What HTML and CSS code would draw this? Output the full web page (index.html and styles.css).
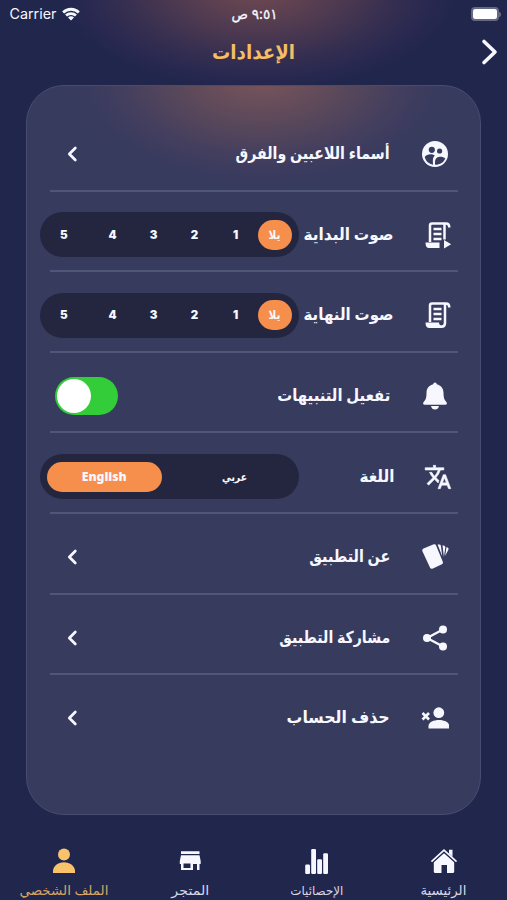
FILE: index.html
```
<!DOCTYPE html>
<html lang="ar" dir="rtl">
<head>
<meta charset="utf-8">
<title>الإعدادات</title>
<link rel="stylesheet" href="styles.css">
</head>
<body>
<div class="screen">
  <div class="status" dir="ltr">
    <div class="carrier"><span class="fit" data-w="47">Carrier</span>
      <svg class="wifi" viewBox="0 0 18 14"><path d="M0.2 4.500a12.400 12.400 0 0 1 17.600 0L15.900 6.600a9.700 9.700 0 0 0-13.800 0ZM3.100 7.600a8.400 8.400 0 0 1 11.800 0L13 9.600a5.600 5.600 0 0 0-8 0ZM6 10.500a4.200 4.200 0 0 1 6 0L9 13.600Z"/></svg>
    </div>
    <div class="time" dir="rtl"><span class="fit" data-w="46">٩:٥١ ص</span></div>
    <div class="power"><span class="battery"><i></i></span><span class="nub"></span></div>
  </div>
  <header class="header">
    <svg class="back" viewBox="0 0 18 28"><path d="M4 3.500l11 10.500L4 24.500"/></svg>
    <h1><span class="fit" data-w="83">الإعدادات</span></h1>
  </header>

  <main class="card">
    <div class="row">
      <svg class="icon" viewBox="0 0 28 28"><circle cx="14" cy="14" r="13"/><g class="cut"><circle cx="10.800" cy="9.800" r="3.100"/><circle cx="18.600" cy="11" r="2.600"/><path d="M3.700 17c2-3.100 7.200-3.600 10.200-1.300-2 1.400-2.300 3.800-1.800 9-4.200-.7-7.200-3.400-8.400-7.700ZM14.200 24.800c-.5-4.300.2-8 4.700-8 2.500 0 4.300.5 5.400 1.700-1.500 3.800-5.100 6.300-10.100 6.300Z"/></g></svg>
      <div class="label"><span class="fit" data-w="154">أسماء اللاعبين والفرق</span></div>
      <svg class="chev" viewBox="0 0 12 18"><path d="M9.300 3L3.300 9l6 6"/></svg>
    </div>
    <div class="row wide">
      <svg class="icon line" viewBox="0 0 28 28"><path d="M6 21V4.200Q6 2.500 8 2.500H22Q25.300 2.500 25.300 6.500M20.500 3V18.500M9.500 8h8M9.500 13h8M9.500 18h8"/><path class="solid" d="M1.500 21.500H15.500V27H5Q1.500 27 1.500 21.500ZM20 19L27.200 23.200 20 27.500Z"/></svg>
      <div class="label"><span class="fit" data-w="90">صوت البداية</span></div>
      <div class="pill sounds"><b class="on"><span class="fit" data-w="12">يلا</span></b><b>1</b><b>2</b><b>3</b><b>4</b><b>5</b></div>
    </div>
    <div class="row wide">
      <svg class="icon line" viewBox="0 0 28 28"><path d="M6 21V4.200Q6 2.500 8 2.500H22Q25.300 2.500 25.300 6.500M21 3V22Q21 25.700 17.500 25.700M9.500 8h8M9.500 13h8M9.500 18h8"/><path class="solid" d="M1.500 21.500H15Q15 24.500 18 24.500V27H5.500Q1.500 27 1.500 21.500Z"/></svg>
      <div class="label"><span class="fit" data-w="90">صوت النهاية</span></div>
      <div class="pill sounds"><b class="on"><span class="fit" data-w="12">يلا</span></b><b>1</b><b>2</b><b>3</b><b>4</b><b>5</b></div>
    </div>
    <div class="row">
      <svg class="icon" viewBox="0 0 28 28"><path d="M14 .5q1.700 0 1.700 1.800c4.300 1 6.800 4.200 6.800 8.500 0 5.500 1 7.300 3 9.400.9 1 .3 2.500-1.300 2.500H3.800c-1.600 0-2.200-1.500-1.300-2.500 2-2.100 3-3.900 3-9.400 0-4.300 2.500-7.500 6.800-8.500Q12.300.5 14 .5ZM10 24h8q-.8 3.500-4 3.500T10 24Z"/></svg>
      <div class="label"><span class="fit" data-w="113">تفعيل التنبيهات</span></div>
      <span class="toggle"><i></i></span>
    </div>
    <div class="row wide">
      <svg class="icon bold" viewBox="0 0 24 24"><path d="M12.870 15.070l-2.540-2.510.03-.03A17.520 17.520 0 0 0 14.070 6H17V4h-7V2H8v2H1v1.990h11.170C11.500 7.920 10.440 9.750 9 11.350 8.070 10.320 7.300 9.190 6.690 8h-2c.73 1.630 1.730 3.170 2.980 4.560l-5.090 5.020L4 19l5-5 3.110 3.110zM18.500 10h-2L12 22h2l1.120-3h4.750L21 22h2zm-2.620 7l1.620-4.330L19.120 17z"/></svg>
      <div class="label"><span class="fit" data-w="35">اللغة</span></div>
      <div class="pill langs"><b><span class="fit" data-w="25">عربي</span></b><b class="on"><span class="fit" data-w="45">English</span></b></div>
    </div>
    <div class="row">
      <svg class="icon" viewBox="0 0 28 28"><path d="M2.500 5.600L12.800 1.300q1.600-.5 2.300 1.100l6.800 16.600q.5 1.500-1 2.200l-9.500 4.500q-1.600.6-2.300-.9L1.300 8Q.8 6.300 2.500 5.600ZM16.600 1.500h1.600q1.400 0 1.700 1.300l1.300 10.500ZM21.500 2.200l1.800.5q1.300.5 1 2l-1.400 9.300ZM25.500 4l1.400.8q1 .7.500 1.900l-3.200 6Z"/></svg>
      <div class="label"><span class="fit" data-w="81">عن التطبيق</span></div>
      <svg class="chev" viewBox="0 0 12 18"><path d="M9.300 3L3.300 9l6 6"/></svg>
    </div>
    <div class="row">
      <svg class="icon" viewBox="0 0 28 28"><path class="link" d="M22 5.500L6 14l16 8.500"/><circle cx="22" cy="5.500" r="4"/><circle cx="6" cy="14" r="4"/><circle cx="22" cy="22.500" r="4"/></svg>
      <div class="label"><span class="fit" data-w="111">مشاركة التطبيق</span></div>
      <svg class="chev" viewBox="0 0 12 18"><path d="M9.300 3L3.300 9l6 6"/></svg>
    </div>
    <div class="row">
      <svg class="icon" viewBox="0 0 28 28"><circle cx="17.800" cy="8.700" r="5.400"/><path d="M7.500 24.500v-2.500c0-4 5.500-6 10.400-6s10.400 2 10.400 6v2.500Z"/><path class="cross" d="M1.500 9l6.500 6.500M8 9l-6.500 6.500"/></svg>
      <div class="label"><span class="fit" data-w="103">حذف الحساب</span></div>
      <svg class="chev" viewBox="0 0 12 18"><path d="M9.300 3L3.300 9l6 6"/></svg>
    </div>
  </main>

  <nav class="tabs">
    <div class="tab"><svg viewBox="0 0 28 28"><path d="M3.800 15L14 5.800 24.200 15v9.500q0 1.500-1.500 1.500H17v-8h-5.500v8H5.300q-1.500 0-1.500-1.500Z"/><path d="M19 2.800h3.500v7L19 6.500Z"/><path class="gap" d="M2.500 15L14 4.700 25.500 15"/><path class="roof" d="M2 14.200L14 3.200l12 11"/></svg><div class="cap"><span class="fit" data-w="46">الرئيسية</span></div></div>
    <div class="tab"><svg viewBox="0 0 28 28"><rect x="2.200" y="17.500" width="4.800" height="9.500" rx="1.200"/><rect x="8.200" y="2" width="4.800" height="25" rx="1.200"/><rect x="14.200" y="12.300" width="4.800" height="14.700" rx="1.200"/><rect x="20.200" y="6.300" width="4.800" height="20.700" rx="1.200"/></svg><div class="cap small"><span class="fit" data-w="53">الإحصائيات</span></div></div>
    <div class="tab"><svg viewBox="0 0 28 28"><path fill-rule="evenodd" d="M5 4.300h18.500V7H5ZM5 8.300h18.500l1.200 5.700v3H23.500v6H21v-6h-4v6H5v-6H3.800v-3ZM7.500 16.500v4.500h7v-4.500Z"/></svg><div class="cap"><span class="fit" data-w="38">المتجر</span></div></div>
    <div class="tab active"><svg viewBox="0 0 28 28"><circle cx="14" cy="7.500" r="6"/><path d="M3 26v-2c0-4.800 5-8.800 11-8.800s11 4 11 8.800v2Z"/></svg><div class="cap"><span class="fit" data-w="89">الملف الشخصي</span></div></div>
  </nav>
</div>
<script src="app.js"></script>
</body>
</html>
```
FILE: styles.css
```
* { box-sizing: border-box; }
body { margin: 0; }
.screen {
  width: 507px; height: 900px; overflow: hidden;
  display: flex; flex-direction: column;
  color: #f7f8ff;
  font-family: "Noto Sans", "DejaVu Sans", sans-serif;
  background: radial-gradient(ellipse 200px 100px at 258px -10px, #704a50 0%, #513b50 38%, #362f50 68%, #282850 88%, rgba(33,38,77,0) 100%) no-repeat, #21264d;
}
svg { display: block; fill: currentColor; flex: none; }
.fit { display: inline-block; white-space: nowrap; }
.status { height: 28px; display: grid; grid-template-columns: 1fr auto 1fr; align-items: center; padding: 0 6px 0 9px; font: 14px/20px Inter, "DejaVu Sans", sans-serif; }
.carrier, .power { display: flex; align-items: center; }
.carrier { gap: 6px; }
.wifi { width: 18px; height: 14px; }
.power { justify-content: flex-end; }
.time { font-size: 14.500px; -webkit-text-stroke: .3px currentColor; }
.battery { width: 28px; height: 14px; border: 2px solid #666984; border-radius: 4px; padding: 0; }
.battery i { display: block; height: 100%; background: #fff; border-radius: 2px; }
.nub { width: 2px; height: 5px; background: #666984; border-radius: 0 2px 2px 0; }
.header { height: 57px; display: grid; grid-template-columns: 18px 1fr 18px; padding: 10px 9px 0; }
.back { width: 18px; height: 28px; }
.back path, .chev path { fill: none; stroke: currentColor; stroke-width: 3.600; stroke-linecap: round; stroke-linejoin: round; }
h1 { margin: 0; text-align: center; font-size: 20px; line-height: 28px; color: #f5bd66; }
.card {
  width: 455px; height: 730px; flex: none; margin-left: 26px; align-self: flex-end;
  border: 1.500px solid #484c70; border-radius: 38px; padding: 25px 22px 0 23px;
  background: radial-gradient(ellipse 195px 112px at 234px -10px, #7b555a 0%, #5c495a 40%, #453f5e 70%, #3a3b5e 88%, rgba(55,59,94,0) 100%) no-repeat, #373b5e;
}
.row { height: 80.600px; display: flex; align-items: center; padding: 8px 9px 0 0; border-bottom: 2px solid #50557a; }
.row:last-child { border-color: transparent; }
.wide { padding-right: 6px; }
.icon { width: 28px; height: 28px; }
.cut { fill: #373b5e; }
.line { fill: none; stroke: currentColor; stroke-width: 2.500; }
.line .solid { fill: currentColor; stroke: none; }
.bold { stroke: currentColor; stroke-width: .5; }
.link { fill: none; stroke: currentColor; stroke-width: 2.300; }
.cross { stroke: currentColor; stroke-width: 2.600; }
.label { flex: 1; min-width: 0; margin: -2px 31px 0 0; font-size: 16.500px; font-weight: 700; line-height: 24px; white-space: nowrap; }
.wide .label { margin-right: 30px; }
.chev { width: 12px; height: 18px; margin-left: 16px; }
.chev path { stroke-width: 2.700; }
.pill { width: 259px; height: 45px; flex: none; margin-left: -10px; border-radius: 23px; background: #242640; display: grid; align-items: center; padding: 7px; font: 700 11.500px/18px "DejaVu Sans", sans-serif; }
.pill b { display: flex; align-items: center; justify-content: center; height: 30px; }
.sounds { grid-template-columns: 34px 45px 37px 45px 37px 1fr; font-family: Inter, "DejaVu Sans", sans-serif; }
.sounds b:last-child { padding-left: 13px; justify-content: flex-end; }
.pill .on { background: #f68e4c; border-radius: 17px; }
.langs { grid-template-columns: 1fr 115px; }
.langs b:first-child { padding-left: 14px; }
.langs .on { font-family: "Noto Sans", sans-serif; }
.toggle { width: 63px; height: 38px; margin-left: 5px; border-radius: 19px; background: #32cd38; display: flex; justify-content: flex-end; padding: 2px; }
.toggle i { width: 34px; height: 34px; background: #fff; border-radius: 50%; }
.tabs { flex: none; height: 85px; padding: 32px 0 0; display: grid; grid-template-columns: 127px 127px 126px 127px; }
.tab { display: flex; flex-direction: column; align-items: center; }
.tab svg { width: 28px; height: 28px; }
.tab .cap { font-size: 13px; line-height: 20px; margin-top: 5px; color: #d7d9ea; }
.tab .small { font-size: 12px; margin-top: 6px; }
.roof { fill: none; stroke: currentColor; stroke-width: 1.700; stroke-linecap: round; }
.gap { fill: none; stroke: #21264d; stroke-width: 2.200; }
.tab.active { color: #f9c36c; }
.tab.active .cap { color: #d7a662; }
```
FILE: app.js
```
// Condenses or widens each caption to its design width.
document.querySelectorAll('.fit').forEach(function (el) {
  var w = el.getBoundingClientRect().width;
  var target = Number(el.dataset.w);
  var slack = (target - w) / 2;
  el.style.transform = 'scaleX(' + target / w + ')';
  el.style.margin = '0 ' + slack + 'px';
});
```
